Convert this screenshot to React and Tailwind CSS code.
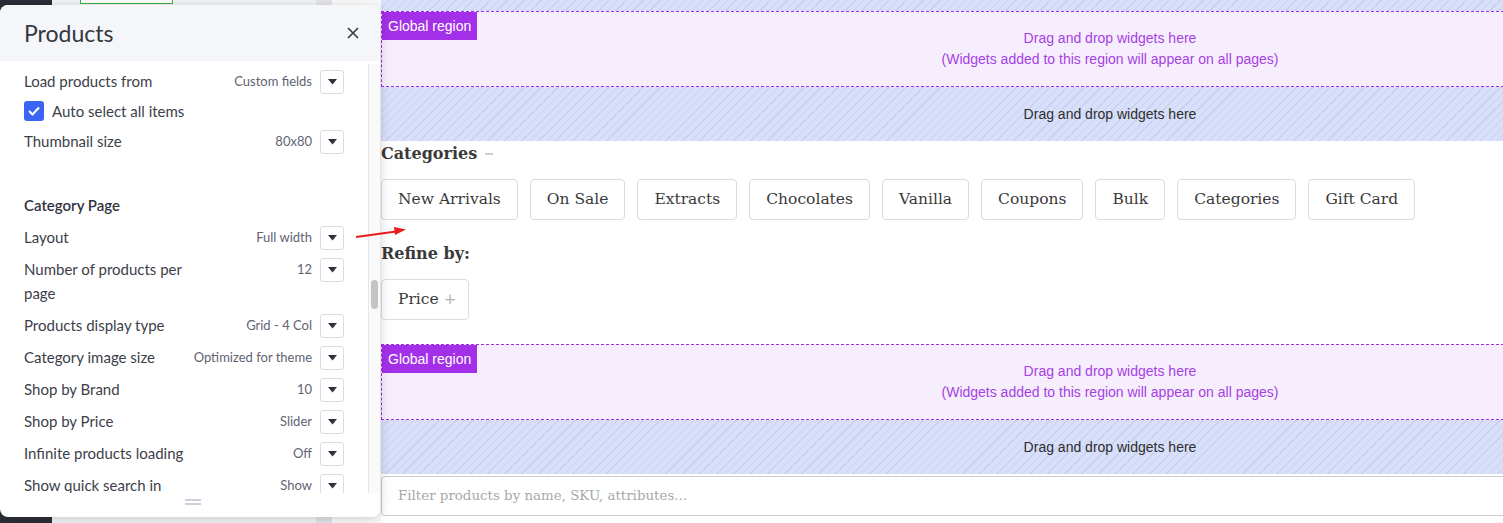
import React from "react";

const panelFont = { fontFamily: "Lato, 'Noto Sans', sans-serif" };
const serifFont = { fontFamily: "'DejaVu Serif', 'Liberation Serif', serif" };
const arialFont = { fontFamily: "'Liberation Sans', Arial, sans-serif" };

const Caret = () => (
  <svg width="9" height="6" viewBox="0 0 9 6">
    <polygon points="0,0 9,0 4.5,5.5" fill="#2f323c" />
  </svg>
);

const Dropdown = () => (
  <div className="w-[24px] h-[24px] border border-[#d9dce6] rounded-[3px] bg-white flex items-center justify-center shrink-0">
    <Caret />
  </div>
);

const SettingRow = ({ label, value, wide }) => (
  <div className="flex items-start justify-between">
    <span className={`text-[15px] leading-[24px] text-[#3d404b] ${wide ? "max-w-[170px]" : ""}`}>{label}</span>
    <div className="flex items-center gap-2 h-[24px] pt-[1px]">
      <span className="text-[13px] text-[#5f6373]">{value}</span>
      <Dropdown />
    </div>
  </div>
);

const hatch =
  "bg-[#d7dffa] bg-[image:repeating-linear-gradient(135deg,#d7dffa_0px,#d7dffa_5px,#c9d0ec_5px,#c9d0ec_6px)]";

const GlobalRegion = () => (
  <div className="relative h-[76px] border border-dashed border-[#a12de6] bg-[#f6eefd]" style={arialFont}>
    <div className="absolute left-0 top-0 h-[28px] px-[6px] bg-[#a42fe8] text-white text-[14px] leading-[28px]">
      Global region
    </div>
    <div className="pt-[16px] text-center text-[14px] leading-[21px] text-[#a63fe3]">
      <div>Drag and drop widgets here</div>
      <div>(Widgets added to this region will appear on all pages)</div>
    </div>
  </div>
);

const DropZone = () => (
  <div className={`h-[54px] flex items-center justify-center text-[14px] text-[#2e2e2e] ${hatch}`} style={arialFont}>
    Drag and drop widgets here
  </div>
);

const categories = ["New Arrivals", "On Sale", "Extracts", "Chocolates", "Vanilla", "Coupons", "Bulk", "Categories", "Gift Card"];

const settings = [
  { label: "Layout", value: "Full width" },
  { label: "Number of products per page", value: "12", wide: true },
  { label: "Products display type", value: "Grid - 4 Col" },
  { label: "Category image size", value: "Optimized for theme" },
  { label: "Shop by Brand", value: "10" },
  { label: "Shop by Price", value: "Slider" },
  { label: "Infinite products loading", value: "Off" },
  { label: "Show quick search in", value: "Show" },
];

export default function App() {
  return (
    <div className="relative flex h-[523px] w-[1503px] overflow-hidden bg-white">
      {/* page behind the panel */}
      <div className="w-[52px] shrink-0 bg-[#2b2e38]" />
      <div className="w-[264px] shrink-0 bg-[#f3f4f6] pl-[28px]">
        <div className="w-[93px] h-[4px] border border-t-0 border-[#3fae49] bg-white" />
      </div>
      <div className="w-[16px] shrink-0 bg-[#e2e4ea]" />
      <div className="w-[49px] shrink-0 bg-[#fafafa]" />

      {/* canvas */}
      <main className="w-[1458px] shrink-0 flex flex-col bg-white">
        <div className={`h-[11px] ${hatch}`} />
        <GlobalRegion />
        <DropZone />

        <div style={serifFont}>
          <h2 className="h-[25px] flex items-center gap-2 text-[16px] font-bold text-[#3a3a3a]">
            Categories <span className="w-[8px] h-[2px] bg-[#cfcfcf]" />
          </h2>
          <div className="mt-[13px] flex gap-3">
            {categories.map((c) => (
              <div
                key={c}
                className="h-[41px] px-[16px] flex items-center border border-[#dcdcdc] rounded-[4px] text-[15.5px] text-[#3a3a3a]"
              >
                {c}
              </div>
            ))}
          </div>

          <h2 className="mt-[22px] h-[24px] flex items-center text-[16px] font-bold text-[#3a3a3a]">Refine by:</h2>
          <div className="mt-[13px] flex">
            <div className="h-[41px] pl-[16px] pr-[12px] flex items-center gap-[5px] border border-[#dcdcdc] rounded-[4px] text-[15.5px] text-[#3a3a3a]">
              Price <span className="text-[#b0b0b0] text-[15px]">+</span>
            </div>
          </div>
        </div>

        <div className="mt-[24px]">
          <GlobalRegion />
        </div>
        <DropZone />
        <div
          className="mt-[2px] h-[40px] border border-[#cccccc] rounded-[4px] flex items-center px-[16px] text-[13.4px] text-[#a8a8a8]"
          style={serifFont}
        >
          Filter products by name, SKU, attributes...
        </div>
      </main>

      {/* floating settings panel */}
      <div
        className="absolute left-0 top-[5px] w-[380px] h-[512px] bg-white rounded-[8px] shadow-[0_2px_12px_rgba(0,0,0,0.18)] flex flex-col overflow-hidden"
        style={panelFont}
      >
        <div className="h-[56px] shrink-0 bg-[#f5f6fa] flex items-center justify-between pl-6 pr-[21px]">
          <span className="text-[23px] text-[#34373f]">Products</span>
          <svg width="12" height="12" viewBox="0 0 12 12">
            <path d="M1 1L11 11M11 1L1 11" stroke="#3a3d48" strokeWidth="1.7" />
          </svg>
        </div>

        <div className="flex h-[432px]">
          <div className="flex-1 overflow-hidden px-6 pt-[8px]">
            <div className="flex flex-col gap-[6px]">
              <SettingRow label="Load products from" value="Custom fields" />
              <div className="flex items-center gap-2 h-[24px]">
                <div className="w-[20px] h-[20px] rounded-[3px] bg-[#3c64f4] flex items-center justify-center">
                  <svg width="12" height="10" viewBox="0 0 12 10">
                    <path d="M1 5L4.5 8.5L11 1.5" stroke="white" strokeWidth="2" fill="none" />
                  </svg>
                </div>
                <span className="text-[15px] text-[#3d404b]">Auto select all items</span>
              </div>
              <SettingRow label="Thumbnail size" value="80x80" />
            </div>

            <div className="mt-10 text-[15px] leading-[24px] font-semibold text-[#313440]">Category Page</div>
            <div className="mt-2 flex flex-col gap-2">
              {settings.map((s) => (
                <SettingRow key={s.label} {...s} />
              ))}
            </div>
          </div>
          <div className="w-[12px] shrink-0 mt-[3px] border-l border-[#e6e7eb] bg-[#fafafa] relative">
            <div className="absolute left-[2px] top-[216px] w-[7px] h-[29px] rounded-full bg-[#c4c4c4]" />
          </div>
        </div>

        <div className="flex-1 flex flex-col items-center pl-[6px] pt-[6px] gap-[2px]">
          <div className="w-[16px] h-[2px] bg-[#cdd1dc]" />
          <div className="w-[16px] h-[2px] bg-[#cdd1dc]" />
        </div>
      </div>

      {/* red annotation arrow */}
      <svg className="absolute left-[350px] top-[222px]" width="60" height="20" viewBox="0 0 60 20">
        <line x1="6" y1="15" x2="46" y2="9.5" stroke="#e81c1c" strokeWidth="2" />
        <polygon points="56,7.5 44,5 45,13" fill="#e81c1c" />
      </svg>
    </div>
  );
}
